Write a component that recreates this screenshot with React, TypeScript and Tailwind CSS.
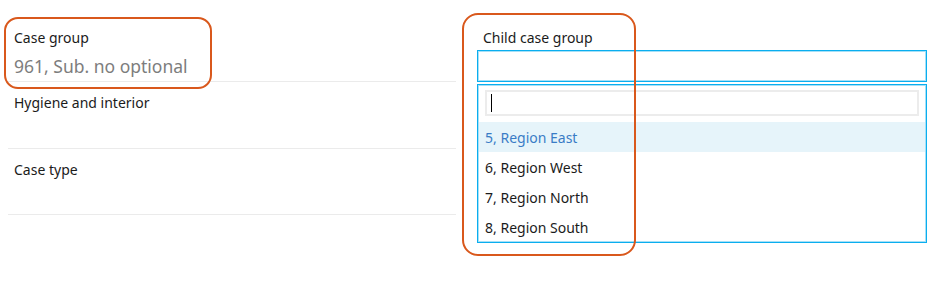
const REGIONS = [
  { id: 5, name: 'Region East' },
  { id: 6, name: 'Region West' },
  { id: 7, name: 'Region North' },
  { id: 8, name: 'Region South' },
]

export default function App() {
  return (
    <div className="relative h-[300px] w-[942px] overflow-hidden bg-white font-['Noto_Sans',sans-serif] text-[14px] text-[#1b1b1b]">
      <div className="flex pt-[16px]">
        {/* left column */}
        <div className="ml-[8px] flex w-[448px] flex-col">
          <div className="h-[66px] border-b border-[#ebebeb] px-[6px] pt-[12px]">
            <div className="leading-[20px]">Case group</div>
            <div className="mt-[7px] text-[17.5px] leading-[22px] text-[#7d7d7d]">961, Sub. no optional</div>
          </div>
          <div className="h-[67px] border-b border-[#ebebeb] px-[6px] pt-[11px] leading-[20px]">Hygiene and interior</div>
          <div className="h-[66px] border-b border-[#ebebeb] px-[6px] pt-[11px] leading-[20px]">Case type</div>
        </div>

        {/* right column */}
        <div className="ml-[21px] flex w-[450px] flex-col">
          <div className="px-[6px] pt-[12px] leading-[20px]">Child case group</div>
          <div className="mt-[2px] h-[32px] border border-[#0aaeef] bg-white shadow-[inset_0_0_0_1px_#a6e0f7]" />
          <div className="mt-[2px] flex h-[159px] flex-col border border-[#0aaeef] bg-white shadow-[inset_0_0_0_1px_#a6e0f7]">
            <div className="mx-[7px] mt-[5px] flex h-[28px] items-center border-2 border-[#ececec] px-[4px]">
              <div className="h-[18px] w-px bg-black" />
            </div>
            <div className="mt-[6px] flex flex-col">
              {REGIONS.map((r, i) => (
                <div
                  key={r.id}
                  className={
                    i === 0
                      ? 'mx-px flex h-[30px] items-center bg-[#e6f4fa] px-[6px] text-[#3a7cc6]'
                      : 'mx-px flex h-[30px] items-center px-[6px]'
                  }>
                  {r.id}, {r.name}
                </div>
              ))}
            </div>
          </div>
        </div>
      </div>

      {/* annotation outlines */}
      <div className="absolute left-[4px] top-[17px] h-[72px] w-[208px] rounded-[14px] border-2 border-[#d9581c]" />
      <div className="absolute left-[462px] top-[13px] h-[243px] w-[174px] rounded-[16px] border-2 border-[#d9581c]" />
    </div>
  )
}
